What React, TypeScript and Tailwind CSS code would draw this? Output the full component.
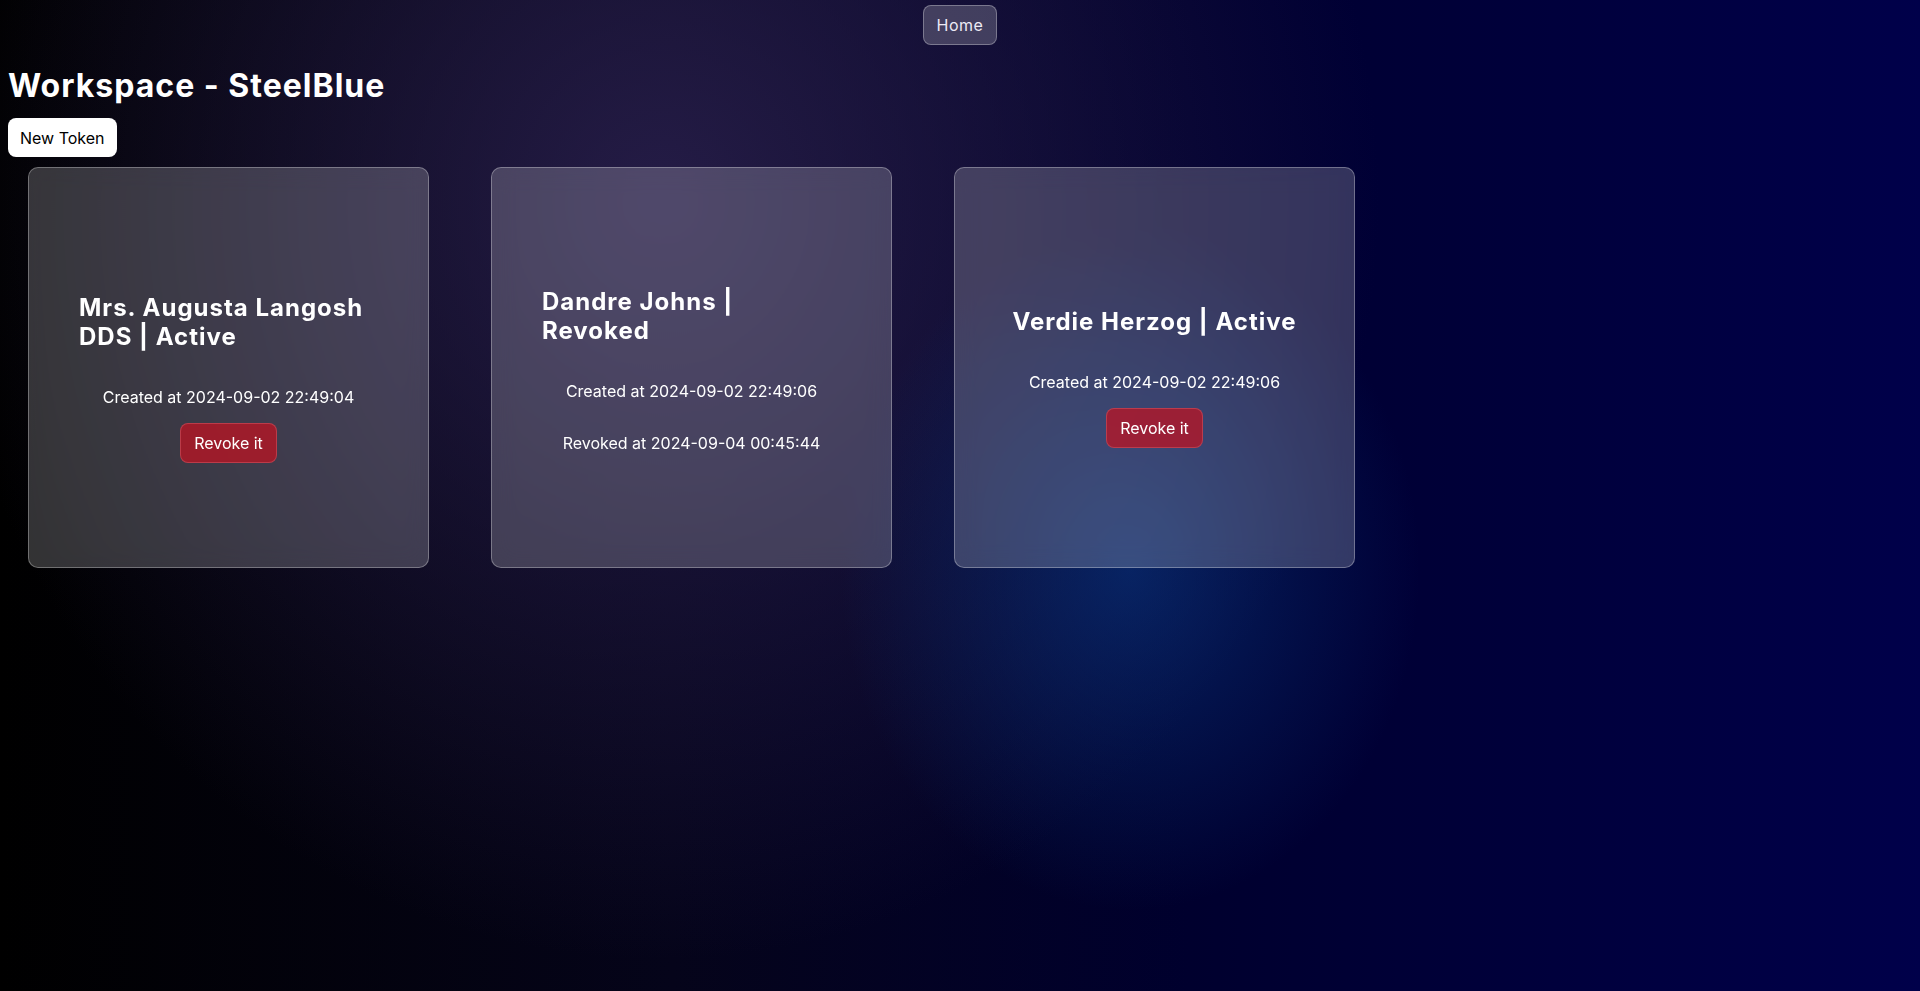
import React from "react";

type Token = {
  name: string;
  status: "Active" | "Revoked";
  createdAt: string;
  revokedAt?: string;
};

const tokens: Token[] = [
  {
    name: "Mrs. Augusta Langosh DDS",
    status: "Active",
    createdAt: "2024-09-02 22:49:04",
  },
  {
    name: "Dandre Johns",
    status: "Revoked",
    createdAt: "2024-09-02 22:49:06",
    revokedAt: "2024-09-04 00:45:44",
  },
  {
    name: "Verdie Herzog",
    status: "Active",
    createdAt: "2024-09-02 22:49:06",
  },
];

const TokenCard = ({ token }: { token: Token }) => {
  return (
    <div className="box-border flex h-[401px] w-[401px] flex-col items-center justify-center rounded-[10px] border border-white/30 bg-white/20 p-[50px] backdrop-blur-md">
      <h2 className="mt-[20px] mb-[20px] text-[24px] font-bold leading-[29px] tracking-[1px]">
        {token.name} | {token.status}
      </h2>
      <p className="my-4 text-[16px] leading-[20px]">
        Created at {token.createdAt}
      </p>
      {token.revokedAt && (
        <p className="my-4 text-[16px] leading-[20px]">
          Revoked at {token.revokedAt}
        </p>
      )}
      {token.status === "Active" && (
        <button className="h-[40px] rounded-[8px] border border-[#d0505e]/60 bg-[rgba(190,20,35,0.75)] px-[13px] text-[16px] text-white">
          Revoke it
        </button>
      )}
    </div>
  );
};

export default function App() {
  return (
    <div className="min-h-screen w-full bg-[radial-gradient(ellipse_290px_340px_at_1130px_570px,rgba(8,48,120,0.7),transparent_100%),radial-gradient(ellipse_720px_760px_at_660px_200px,rgba(42,32,78,0.85),transparent_100%),linear-gradient(to_right,#000000_0%,#05041a_35%,#00002e_62%,#00004a_100%)] font-['Inter',sans-serif] text-white">
      <nav className="flex justify-center pt-[5px]">
        <button className="h-[40px] rounded-[8px] border border-white/30 bg-white/20 px-[13px] text-[16px] tracking-[0.5px] text-[#eceaf4]">
          Home
        </button>
      </nav>
      <main className="px-[8px]">
        <h1 className="mt-[21px] mb-[13px] text-[32px] font-bold leading-[39px] tracking-[1px]">
          Workspace - SteelBlue
        </h1>
        <button className="h-[39px] rounded-[8px] bg-white px-[12px] text-[16px] text-black">
          New Token
        </button>
        <div className="mt-[10px] flex gap-[62px] pl-[20px]">
          {tokens.map((token) => (
            <TokenCard key={token.name} token={token} />
          ))}
        </div>
      </main>
    </div>
  );
}
